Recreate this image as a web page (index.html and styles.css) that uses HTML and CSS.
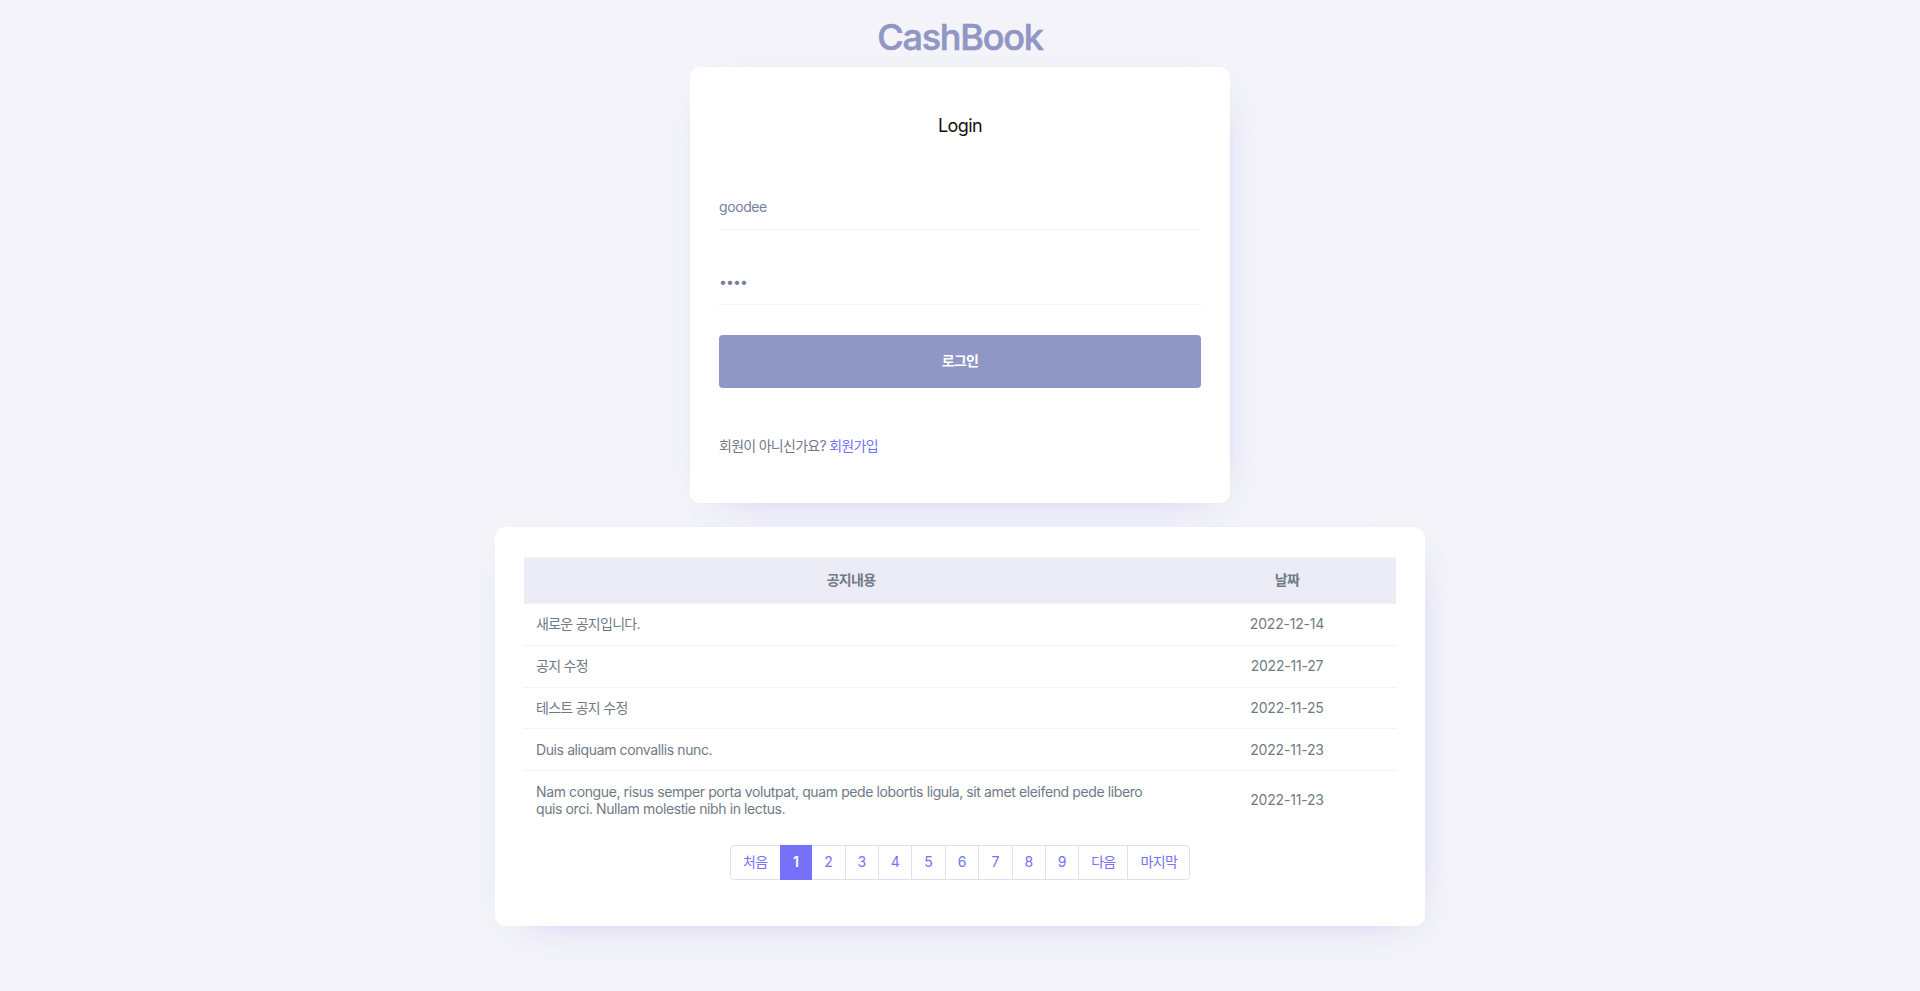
FILE: index.html
```html
<!DOCTYPE html>
<html lang="ko">
<head>
<meta charset="utf-8">
<title>CashBook</title>
<link rel="stylesheet" href="styles.css">
</head>
<body>
<main class="page">
  <h1 class="brand">CashBook</h1>
  <section class="card login">
    <h4 class="login-title">Login</h4>
    <form class="login-form">
      <input class="field" type="text" value="goodee" aria-label="ID">
      <input class="field password" type="password" value="1234" aria-label="Password">
      <button class="submit" type="button">로그인</button>
    </form>
    <p class="signup">회원이 아니신가요? <a class="link" href="#">회원가입</a></p>
  </section>
  <section class="card notices">
    <table class="table">
      <thead>
        <tr><th class="col-text">공지내용</th><th class="col-date">날짜</th></tr>
      </thead>
      <tbody>
        <tr><td class="ko">새로운 공지입니다.</td><td class="date">2022-12-14</td></tr>
        <tr><td class="ko">공지 수정</td><td class="date">2022-11-27</td></tr>
        <tr><td class="ko">테스트 공지 수정</td><td class="date">2022-11-25</td></tr>
        <tr><td>Duis aliquam convallis nunc.</td><td class="date">2022-11-23</td></tr>
        <tr><td>Nam congue, risus semper porta volutpat, quam pede lobortis ligula, sit amet eleifend pede libero quis orci. Nullam molestie nibh in lectus.</td><td class="date">2022-11-23</td></tr>
      </tbody>
    </table>
    <nav class="pagination">
      <a class="page-link wide" href="#">처음</a>
      <a class="page-link active" href="#">1</a>
      <a class="page-link" href="#">2</a>
      <a class="page-link" href="#">3</a>
      <a class="page-link" href="#">4</a>
      <a class="page-link" href="#">5</a>
      <a class="page-link" href="#">6</a>
      <a class="page-link" href="#">7</a>
      <a class="page-link" href="#">8</a>
      <a class="page-link" href="#">9</a>
      <a class="page-link wide" href="#">다음</a>
      <a class="page-link last" href="#">마지막</a>
    </nav>
  </section>
</main>
</body>
</html>
```
FILE: styles.css
```css
* { box-sizing: border-box; }
body {
  margin: 0;
  min-height: 991px;
  background: #f3f3f9;
  color: #707a87;
  font: 14px/17px Inter, "Noto Sans CJK KR", sans-serif;
}
a { text-decoration: none; }
.page { display: flex; flex-direction: column; align-items: center; }
.brand {
  margin: 0;
  height: 67px;
  padding-top: 15px;
  color: #9097c4;
  font-size: 36px;
  line-height: 44px;
  font-weight: 500;
  letter-spacing: -1.2px;
  -webkit-text-stroke: 0.6px #9097c4;
}
.card {
  background: #fff;
  border-radius: 10px;
  box-shadow: 6px 11px 41px -28px #a99de7;
}
.login { width: 540px; height: 436px; padding: 48px 29px 0; }
.login-title {
  margin: 0;
  color: #111;
  font-size: 18px;
  line-height: 22px;
  font-weight: 400;
  letter-spacing: -0.6px;
  text-align: center;
}
.login-form { display: flex; flex-direction: column; margin-top: 48px; }
.field {
  height: 45px;
  margin: 0 0 30px;
  padding: 0 0 1px;
  border: 0;
  border-bottom: 1px solid #f3f3f3;
  background: transparent;
  color: #76809a;
  font: inherit;
  letter-spacing: -0.4px;
  outline: 0;
}
.password { letter-spacing: -0.9px; }
.submit {
  height: 53px;
  padding: 0 0 2px;
  border: 0;
  border-radius: 4px;
  background: #9097c4;
  color: #fff;
  font: inherit;
  font-weight: 700;
  letter-spacing: -0.7px;
}
.signup { margin: 49px 0 0; font-size: 14px; letter-spacing: -0.72px; }
.link { color: #7571f9; }
.notices { width: 930px; height: 399px; margin-top: 24px; padding: 30px 29px 0; }
.table { width: 100%; border-collapse: collapse; table-layout: fixed; }
.table th {
  height: 46px;
  padding: 0 0 2px;
  background: #ececf6;
  border-top: 1px solid #f3f3f3;
  border-bottom: 1px solid #f3f3f3;
  font-weight: 700;
  letter-spacing: -0.7px;
}
.table td {
  padding: 11.2px 12px 12.65px;
  border-top: 1px solid #f3f3f3;
  letter-spacing: -0.39px;
  vertical-align: middle;
}
.col-text { width: 75%; }
.table .ko { letter-spacing: -0.72px; }
.table .date { letter-spacing: -0.2px; text-align: center; }
.pagination { display: flex; justify-content: center; margin-top: 16.3px; }
.page-link {
  width: 34.4px;
  height: 35px;
  margin-left: -1px;
  border: 1px solid #dee2e6;
  color: #7571f9;
  line-height: 32px;
  text-align: center;
}
.wide { width: 50px; letter-spacing: -0.7px; }
.wide:first-child { width: 51px; margin-left: 0; border-radius: 4px 0 0 4px; }
.last { width: 63px; border-radius: 0 4px 4px 0; letter-spacing: -0.7px; }
.active { position: relative; width: 32.6px; border-color: #7571f9; background: #7571f9; color: #fff; font-weight: 600; }
```
